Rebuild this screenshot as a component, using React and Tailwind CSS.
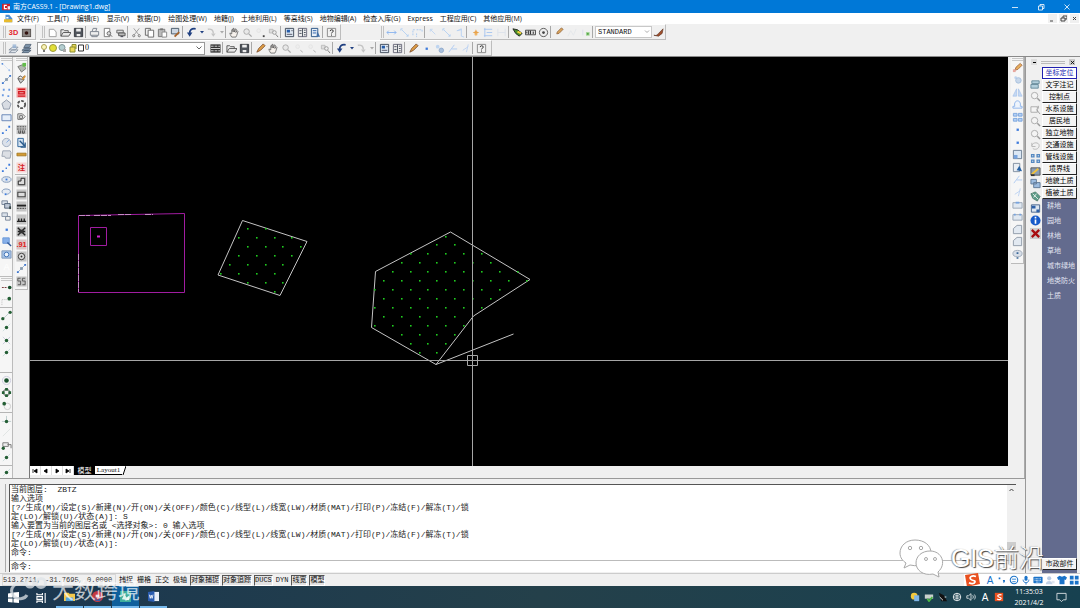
import React from "react";

const ICONS = {
  three: <text x="6" y="9" textAnchor="middle" fontSize="8" fontWeight="700" fill="#e3242b" fontFamily="Liberation Sans, sans-serif">3D</text>,
  camera: <><rect x="1.5" y="2.5" width="9" height="8" fill="#8c8683" stroke="#55504d" /><circle cx="6" cy="6.5" r="2" fill="#33120f" /></>,
  file: <path d="M2.5 2.5h5l2.5 3v5H2.500z" fill="#fff" stroke="#9a9a9a" />,
  open: <path d="M1 10V3h3l1 1h4v2M1 10l2.500-4H12L9.500 10z" fill="#e8e8e8" stroke="#555" />,
  save: <><path d="M1.500 1.500h9v9h-9z" fill="#50555c" stroke="#33373c" /><path d="M3.500 2h5v3h-5zM4 7.500h4V10H4z" fill="#eee" /></>,
  print: <path d="M3.500 4.500l1-3h4l-1 3M1.500 5h9v4h-9zM3 9v1.500h6V9" fill="#eee" stroke="#777f8a" />,
  preview: <><path d="M2.500 1.500h6v9h-6z" fill="#fff" stroke="#777" /><circle cx="7.500" cy="7" r="2" fill="#ddd" stroke="#666" /><path d="M9 8.500l2 2" stroke="#555" /></>,
  plot: <><path d="M2 3.500h7v3H2z" fill="#ddd" stroke="#666" /><path d="M4 6.500h7v3H4z" fill="#bbb" stroke="#555" /><path d="M6 10.500h3" stroke="#334" /></>,
  cut: <><path d="M3 1.500l5.500 7M9 1.500l-5.500 7" stroke="#999" fill="none" /><circle cx="3" cy="9.500" r="1.200" fill="none" stroke="#777" /><circle cx="9" cy="9.500" r="1.200" fill="none" stroke="#777" /></>,
  copy: <><path d="M1.500 1.500h5.500v7.500H1.500z" fill="#eee" stroke="#666" /><path d="M4.500 3.500h6v7.500h-6z" fill="#fff" stroke="#666" /></>,
  paste: <><path d="M1.500 2.500h7v8h-7z" fill="#bbb" stroke="#777" /><path d="M3.500 1.500h3v2h-3z" fill="#777" /><path d="M5.500 5.500h5v5.500h-5z" fill="#fff" stroke="#888" /></>,
  brush: <><path d="M1.500 1.500h8v6h-8z" fill="#ccd6e2" stroke="#445566" /><path d="M5 10.500l5-5" stroke="#a5622b" strokeWidth="2" /></>,
  undo: <><path d="M10.500 2C6 1.200 3.800 3.500 4 7" fill="none" stroke="#1f3f80" strokeWidth="2" /><path d="M1 6h6l-3 4.500z" fill="#1f3f80" /></>,
  redo: <><path d="M2 2.500C6 1.800 8 3.500 8 7" fill="none" stroke="#c4c4c4" strokeWidth="1.500" /><path d="M5.500 7h5L8 10.500z" fill="#c4c4c4" /></>,
  hand: <path d="M3 11C1.500 9 1 7.500 1 6.500l2 1V3l1-.5.500 3V1.500h1l.500 4 1-3.500 1 .5-.5 3.500 1.500-2 .8.8L8.500 9l-1 2z" fill="#f6f1ec" stroke="#555" strokeWidth=".8" />,
  zoom: <><circle cx="5" cy="5" r="3" fill="#e8e8e8" stroke="#aaa" /><path d="M7.500 7.500l3 3" stroke="#aaa" strokeWidth="1.500" /></>,
  zoomWin: <><circle cx="4" cy="4" r="2" fill="#eee" stroke="#e2e2e2" /><path d="M8.500 9h2v2h-2z" fill="#444" /></>,
  zoomPrev: <><path d="M1.500 2.500h4v4h-4z" fill="#ddd" stroke="#bbb" /><circle cx="7" cy="6" r="2" fill="#eee" stroke="#999" /><path d="M8.500 8l2.500 3" stroke="#777" /></>,
  zoomFaint: <><circle cx="4" cy="4" r="2" fill="#eee" stroke="#e4e4e4" /><path d="M7 8l2.500 2" stroke="#aaa" /></>,
  props: <><path d="M1.500 1.500h9v9h-9z" fill="#dde6f0" stroke="#3b4656" /><path d="M3 3h3.500v3H3z" fill="#245ba8" /><path d="M3 8h6M8 4h1.500" stroke="#556" /></>,
  design: <><path d="M1.500 1.500h9v9h-9z" fill="#eee" stroke="#667" /><path d="M6 1.500v9M2.500 4H5M2.500 7H5M7.500 3.500h2M7.500 6h2M7.500 8.500h2" stroke="#444c59" /></>,
  palette: <><path d="M1.500 1.500h7v9h-7z" fill="#e8eff7" stroke="#245082" /><path d="M3 4h4M3 6.500h4" stroke="#245ba8" /><path d="M8 4.500l3 6H7z" fill="#4370a8" /></>,
  help: <><path d="M1.500 1.500h9v9h-9z" fill="#f2f2f2" stroke="#888" /><path d="M4.500 4.500c0-2 3.500-2 3.500 0 0 1.200-2 1-2 2.500M6 8.200v1.200" fill="none" stroke="#222" /></>,
  dimLin: <path d="M1 6h10M3 4L1 6l2 2M9 4l2 2-2 2" fill="none" stroke="#8bb5ef" />,
  dimAl: <path d="M3 3l7 7M2 4V2h2M10 8v2H8" fill="none" stroke="#b4d0f2" />,
  dimArc: <path d="M1 9V3h3M5 3h6v3M5 7v4" fill="none" stroke="#a8c8f0" strokeDasharray="2 1" />,
  dimRad: <path d="M3 3l5 5M2.500 5V2.500H5" fill="none" stroke="#bfd5f2" />,
  dimAng: <path d="M4 4l4-2v8l3 1M8 3l-5 1" fill="none" stroke="#b8d1f2" />,
  spark: <><path d="M6.500 2.500l1 2.500 2.500 1-2.500 1-1 3-1-3L3 6l2.500-1z" fill="#e8a24a" /><path d="M5 7h3v2H5z" fill="#f0b565" /></>,
  base: <path d="M1 2.500h9M1 9.500h9M2 1v10M4 6h6" stroke="#a6c5f0" fill="none" />,
  cont: <path d="M2 2v8M10 2v8M2 6h8" stroke="#dde3eb" fill="none" />,
  lead: <><path d="M1 2l5 1 5 4-3 3-4-3z" fill="#4c8f2a" stroke="#222" /><path d="M6 5l4 2" stroke="#f4d23b" strokeWidth="2" /></>,
  tol: <><path d="M.5 3.500h11v5H.5z" fill="#ddd" stroke="#444" /><path d="M2 5v2M4 4v4M6 4v4M9 5v2.500" stroke="#222" /></>,
  center: <><circle cx="6" cy="6" r="4.500" fill="#eee" stroke="#555" /><circle cx="6" cy="6" r="1.500" fill="#444" /></>,
  pencil: <path d="M3 7.500l.5-2L8 1l2 1.500-4.500 4.500z" fill="#d9a35c" stroke="#8e6238" strokeWidth=".8" />,
  faintA: <path d="M1 10l3-6 3 5 3-7" fill="none" stroke="#e4e7ea" />,
  greenDot: <><path d="M3 3v6" stroke="#dde" /><path d="M6.500 5.500h4v4h-4z" fill="#a5d69a" /><path d="M7.500 6.500h2v2h-2z" fill="#57a548" /></>,
  styleBrush: <path d="M1 9c3 1 4-1 5-2l5-5-1 5-4 3z" fill="#a14f2c" stroke="#5d3322" strokeWidth=".7" />,
  layers: <><path d="M1 7.500l4-3h6L8 7.500zM1 10.500l4-3h6l-3 3z" fill="#dfe5ec" stroke="#8a95a4" /><path d="M5 1.500h4v4H5z" fill="#8cabd2" opacity=".7" /></>,
  layersPrev: <path d="M1 8l3-2.500h7L8 8zM1 10.500L4 8h7l-3 2.500zM3 5l2-3.500h6L9 5z" fill="#7d92a8" stroke="#44566b" strokeWidth=".8" />,
  rows: <><path d="M.5 1.500h11v9H.5z" fill="#333" /><path d="M1 3.500h10M1 8.500h10" stroke="#ddd" strokeDasharray="3 1" /><path d="M1 6h10" stroke="#ddd" /></>,
  match: <path d="M2 10l2-4 5-5 2 2-5 5z" fill="#dd9d45" stroke="#7b4b2b" strokeWidth=".9" />,
  bluePt: <path d="M5 5h2.500v2.500H5z" fill="#3e7bdc" />,
  dblPt: <><circle cx="4" cy="4" r="2" fill="#bfd5f0" /><circle cx="8" cy="8" r="2.500" fill="#a7bfdc" stroke="#7e9dc4" strokeWidth=".7" /></>,
  trim: <path d="M2 10L8 2M5 6.500h6" fill="none" stroke="#aecbf2" />,
  extend: <path d="M3 8l6-4M9 1.500L7 10" fill="none" stroke="#bcd2f2" />,
  line: <><path d="M2 2l8 8" stroke="#d5e3f5" /><circle cx="1.500" cy="2" r="1" fill="#4d85d6" /><circle cx="9" cy="9" r="1" fill="#9dbde9" /></>,
  nodes: <><path d="M1.500 10.500l9-9" stroke="#9bb4d2" /><path d="M1 9h2v2H1zM9 1h2v2H9z" fill="#3c76d0" /><path d="M4.500 4.500h3v3h-3z" fill="#8599ae" /></>,
  pts: <path d="M2 2h2v2H2zM8 2h2v2H8zM1 8h2v2H1zM7 9h2v2H7z" fill="#6b9ae2" />,
  pentagon: <path d="M6 1l5 4-2 6H3L1 5z" fill="#d8dce3" stroke="#8e98a8" />,
  rect: <path d="M1 3h10v6.500H1z" fill="#e6eef9" stroke="#6482b4" />,
  diag: <path d="M1 9h2v2H1zM5 6h1.500v1.500H5zM8 2h2v2H8z" fill="#3c7adb" />,
  circle: <><circle cx="6" cy="6" r="4.500" fill="#dbe1ea" stroke="#9daabd" /><path d="M6 6l3-3" stroke="#7fa7e0" /></>,
  cloud: <path d="M2 2h8l1 2-1 6H5L4 8H1z" fill="#dcdfe4" stroke="#9aa3b0" />,
  ellipse: <><ellipse cx="6" cy="6" rx="5" ry="3" fill="#dfe6ef" stroke="#7e96b8" /><path d="M5 5h2v2H5z" fill="#3c7adb" /></>,
  arc: <><path d="M2 8c-3-4 3-6 7-4 3 2 0 5-3 5" fill="#e6ebf2" stroke="#7e96b8" /><path d="M4 8h2v2H4z" fill="#3c7adb" /></>,
  insert: <><path d="M1 2h6v4H1z" fill="#d9e0e9" stroke="#768498" /><path d="M4 5h6v5H4z" fill="#bfc9d6" stroke="#4e5d73" /><path d="M9 8h2v3H9z" fill="#344" /></>,
  block: <><path d="M1 2h6v4H1z" fill="#d9e0e9" stroke="#8793a4" /><path d="M5 6h5v4H5z" fill="#eee" stroke="#768498" /></>,
  hatch: <><path d="M2 2h7v6H2z" fill="#86afe9" stroke="#6b98d8" /><path d="M7 7l4 4" stroke="#325a99" strokeWidth="1.500" /></>,
  region: <><path d="M1 2h10v8H1z" fill="#a4c2e8" stroke="#7f98ba" /><circle cx="6" cy="6" r="2.500" fill="#eff5fc" stroke="#3b6eb4" /></>,
  letter: <text x="6" y="10" textAnchor="middle" fontSize="10" fill="#fff" fontFamily="Liberation Sans, sans-serif">A</text>,
  blank: null,
  gSpin: <><path d="M2 5l5-2 4 4-5 4z" fill="#b3b8b0" stroke="#777" /><path d="M7 1h4v4H7z" fill="#63bd4b" /></>,
  gPick: <><path d="M2 4l3-2 2 2 3-2M2 5l3 5 4-4z" fill="#ccc" stroke="#555" /><path d="M7 6l3-4" stroke="#d8973d" strokeWidth="2" /></>,
  redBox: <><path d="M.5.500h11v11H.5z" fill="#f2a5a5" /><path d="M2 2.500h8M3 5h6v2.500H3zM2 10h8" fill="none" stroke="#d31920" strokeWidth="1.500" /></>,
  ring: <><circle cx="6" cy="6" r="4" fill="none" stroke="#555" strokeWidth="2" strokeDasharray="3 1.500" /></>,
  tag: <path d="M2 2h5l3 3-3 3H2zM4 4h3v3H4z" fill="#eee" stroke="#666" />,
  grey: <><path d="M.5 1h11v10H.5z" fill="#c4c4c4" /><path d="M1 3h10M1 5.500h10" stroke="#444" strokeDasharray="2 1" /><path d="M3 7v3h2V7M7 7v3h2V7" stroke="#444" fill="none" /></>,
  building: <><path d="M2 1.500h6v9H2z" fill="#d5e4f2" stroke="#285f97" /><path d="M4 4l6 6M10 6v5H5" stroke="#2b5b8b" strokeWidth="1.500" fill="none" /></>,
  ruler: <path d="M1 4.500h10v3H1z" fill="#d39b33" stroke="#9c721f" strokeWidth=".8" />,
  note: <><path d="M.5.500h11v11H.5z" fill="#f6d4d4" /><text x="6" y="9" textAnchor="middle" fontSize="8" fontWeight="700" fill="#d31920" fontFamily="Noto Sans CJK SC, sans-serif">注</text></>,
  lshape: <><path d="M.5.500h11v11H.5z" fill="#c4c4c4" /><path d="M2.500 9.500v-4h3v-3h4v7z" fill="#ddd" stroke="#222" /></>,
  gRect: <><path d="M.5.500h11v11H.5z" fill="#c4c4c4" /><path d="M2 3.500h8v5H2z" fill="#ddd" stroke="#444" strokeWidth="1.200" /></>,
  gLine: <><path d="M.5.500h11v11H.5z" fill="#c4c4c4" /><path d="M1 5h10" stroke="#222" strokeWidth="2" /><path d="M1 8h10" stroke="#333" strokeDasharray="2 1" /></>,
  gWall: <><path d="M.5.500h11v11H.5z" fill="#c4c4c4" /><path d="M1 8h10M3 5v3M6 5v3M9 5v3" stroke="#222" strokeWidth="1.500" /></>,
  gCross: <><path d="M.5.500h11v11H.5z" fill="#bbb" /><path d="M2 2l8 8M10 2l-8 8M2 6h8" stroke="#222" strokeWidth="1.500" /><path d="M4 4h4v4H4z" fill="#333" /></>,
  red91: <><path d="M.5.500h11v11H.5z" fill="#d8c4c4" /><text x="6" y="9" textAnchor="middle" fontSize="8" fontWeight="700" fill="#e02020" fontFamily="Liberation Sans, sans-serif">.91</text></>,
  gCircle: <><path d="M.5.500h11v11H.5z" fill="#c4c4c4" /><circle cx="6" cy="6" r="3.500" fill="#ddd" stroke="#333" /><circle cx="6" cy="6" r="1" fill="#333" /></>,
  gSS: <><path d="M.5.500h11v11H.5z" fill="#c4c4c4" /><path d="M5 2.500H2v3h3v4H2M10 2.500H7v3h3v4H7" fill="none" stroke="#555" /></>,
  sTrack: <><circle cx="9.500" cy="6" r="2" fill="#174f2b" /><path d="M1 6h2M4 6h2" stroke="#732f2f" /></>,
  sFrom: <><path d="M1 11V5h5" stroke="#bbb" strokeDasharray="1 1" fill="none" /><circle cx="9" cy="4" r="2" fill="#245f35" /></>,
  sEnd: <><path d="M2 10l8-8" stroke="#bcc" /><circle cx="2" cy="9.500" r="1.800" fill="#245f35" /><circle cx="10" cy="2.500" r="1.800" fill="#245f35" /></>,
  sMid: <><path d="M2 10l8-8" stroke="#cdd" /><circle cx="6" cy="6" r="1.900" fill="#245f35" /></>,
  sInt: <><path d="M2 10l8-8M2 2l8 8" stroke="#ccd" /><circle cx="6" cy="6" r="1.900" fill="#245f35" /></>,
  sCen: <><circle cx="6" cy="6" r="4.500" fill="none" stroke="#ccd" /><circle cx="6" cy="6" r="2.500" fill="#174f2b" /></>,
  sQuad: <><circle cx="6" cy="6" r="3.500" fill="none" stroke="#555" /><path d="M4.500 1h3v3h-3zM4.500 8h3v3h-3zM1 4.500h3v3H1zM8 4.500h3v3H8z" fill="#245f35" /></>,
  sTan: <><circle cx="7" cy="7" r="3.500" fill="none" stroke="#ccc" /><circle cx="3.500" cy="4" r="2" fill="#245f35" /></>,
  sPerp: <><path d="M6 1v5M1 7h10" stroke="#bcc" /><circle cx="6" cy="7" r="1.900" fill="#245f35" /></>,
  sFaint: <path d="M2 10l8-8" stroke="#dfe4e2" />,
  sIns: <><path d="M2 3h6v4H2zM7 5h4v4" fill="#eee" stroke="#777" /><circle cx="2.500" cy="9" r="1.800" fill="#245f35" /></>,
  erase: <><path d="M3 9l1.500-3.500L9 1.500l2 2L6.500 8z" fill="#e7ae5d" stroke="#9a5a33" strokeWidth=".8" /><path d="M1 8h3v3H1z" fill="#e8a8a0" /></>,
  copies: <><circle cx="4" cy="4" r="1.500" fill="#bdd3ef" /><circle cx="7" cy="7" r="3" fill="#c7d7ea" stroke="#a6bfdd" /></>,
  mirror: <path d="M5 2v8H1zM7 2v8h4z" fill="#c6d9f3" stroke="#a2c1ea" strokeWidth=".7" />,
  offset: <path d="M1 10h10V8H9c2-8-8-8-6 0H1z" fill="#eef4fc" stroke="#8db4ea" />,
  array: <path d="M1.500 1.500h4v3h-4zM7 1.500h4v3H7zM1.500 7h4v3h-4zM7 7h4v3H7z" fill="#b5d1f5" stroke="#7ba5dd" />,
  scale: <><path d="M1.500 1.500h9v9h-9z" fill="#dbe7f4" stroke="#66788f" /><path d="M2 6.500h4v4H2z" fill="#77a4e0" /></>,
  stretch: <><path d="M1.500 1.500h7v9h-7z" fill="#e9eef4" stroke="#7d8c9e" /><path d="M5 9l3-5 3 6z" fill="#2662a5" /></>,
  fillet: <path d="M1.500 10.500V5l4-3.500h5v9z" fill="#e2e9f1" stroke="#8e99a7" />,
  breakBox: <><path d="M1 4h10v6H1z" fill="#e0e8f1" stroke="#98a4b3" /><path d="M4 3h4v2H4z" fill="#77a4e0" /></>,
  join: <><path d="M1 4h10v6H1z" fill="#e0e8f1" stroke="#98a4b3" /><path d="M2 3h2v2H2zM8 3h2v2H8z" fill="#77a4e0" /></>,
  bubble: <><ellipse cx="6" cy="5" rx="5" ry="3.500" fill="#d7dee8" stroke="#9ca9b8" /><path d="M5 3.500h2v2H5zM5 9h2v1.500H5z" fill="#3b6799" /></>,
  disks: <path d="M2 2h8v3H2zM1 6h8v4H1z" fill="#b3cfdc" stroke="#678b9b" />,
  loop: <><circle cx="5" cy="5" r="3.500" fill="#f4f4f4" stroke="#aaa" /><path d="M8 8l3 3" stroke="#999" strokeWidth="1.500" /></>,
  extent: <><path d="M1 3h7v6H1z" fill="#f4f4f4" stroke="#aaa" /><path d="M7 6l4 5M9 2v3" stroke="#999" /></>,
  swap: <path d="M2 5c1-4 8-4 8 0s-5 5-7 3M2 2v4h4" fill="none" stroke="#b4b4b4" />,
  quads: <><path d="M1 1h4v4H1zM7 1h4v4H7zM1 7h4v4H1zM7 7h4v4H7z" fill="#5588c0" /><path d="M2.500 2.500h1v1h-1zM8.500 2.500h1v1h-1zM2.500 8.500h1v1h-1zM8.500 8.500h1v1h-1z" fill="#fff" /></>,
  paint: <><path d="M1 2h10v8H1z" fill="#8a9db5" stroke="#555" /><path d="M2 9l7-6" stroke="#f0c13b" strokeWidth="2" /><path d="M1 9h4v2H1z" fill="#333" /></>,
  sheets: <path d="M1 1.500h6v5H1zM4 5h7v5.500H4z" fill="#9dbce0" stroke="#5f7896" />,
  globe: <><path d="M1 3l5-2 5 5-3 5-5-3z" fill="#5e9d8a" stroke="#44705f" strokeWidth=".8" /><path d="M3 3l6 6M4 7l3-4" stroke="#e9efe9" /></>,
  table: <><path d="M1.500 2h9v8h-9z" fill="#dce6f1" stroke="#44608a" /><path d="M2 3h4v3H2zM7 7h3v3H7z" fill="#2b5fa8" /></>,
  info: <><circle cx="6" cy="6" r="5.500" fill="#1559c9" /><path d="M6 5v4.500M6 2v1.800" stroke="#fff" strokeWidth="1.800" /></>,
  close: <><path d="M0 0h12v12H0z" fill="#ccc" /><path d="M2 2l8 8M10 2l-8 8" stroke="#a80d10" strokeWidth="2.500" /></>,
};

function Svg({ n, c = "size-[11px]" }) {
  return <svg viewBox="0 0 12 12" className={c} aria-hidden="true">{ICONS[n]}</svg>;
}

function Bar({ items }) {
  return items.split(" ").map((n, i) => {
    if (n === "|") return <span key={i} className="h-3 w-[3px] border-l border-[#a8a8a8]" />;
    if (n === "v" || n === "w")
      return (
        <button key={i} aria-label="more" className="flex w-[7px] justify-center">
          <svg viewBox="0 0 4 3" className="h-[3px] w-1"><path d="M0 0h4L2 2.500z" fill={n === "v" ? "#1f3f80" : "#aaa"} /></svg>
        </button>
      );
    return (
      <button key={i} aria-label={n} className="flex h-[13px] w-[13px] items-center justify-center">
        <Svg n={n} />
      </button>
    );
  });
}

function Grip() {
  return <span className="mr-px ml-px h-3 w-[3px] border-x border-[#c2c2c2]" />;
}

function HGrip() {
  return <span className="my-px h-[3px] w-[11px] border-y border-[#c8c8c8]" />;
}

function Strip({ items, className }) {
  return (
    <div className={"flex flex-col items-center justify-between " + className}>
      {items.split(" ").map((n, i) =>
        n === "|" ? (
          <span key={i} className="w-3 border-t border-[#b5b5b5]" />
        ) : (
          <button key={i} aria-label={n} className="flex size-[11px] items-center justify-center"><Svg n={n} /></button>
        )
      )}
    </div>
  );
}

const MENUS = ["文件(F)", "工具(T)", "编辑(E)", "显示(V)", "数据(D)", "绘图处理(W)", "地籍(J)", "土地利用(L)", "等高线(S)", "地物编辑(A)", "检查入库(G)", "Express", "工程应用(C)", "其他应用(M)"];

function inside(poly, x, y) {
  let hit = false;
  for (let i = 0, j = poly.length - 1; i < poly.length; j = i++) {
    const [xi, yi] = poly[i];
    const [xj, yj] = poly[j];
    if (yi > y !== yj > y && x < ((xj - xi) * (y - yi)) / (yj - yi) + xi) hit = !hit;
  }
  return hit;
}

function lattice(poly, ox, oy) {
  const dots = [];
  for (let r = -12; r <= 12; r++)
    for (let c = -14; c <= 18; c++) {
      if ((r + c) % 2 !== 0) continue;
      const x = ox + c * 8.93;
      const y = oy + r * 8.93;
      if (inside(poly, x, y)) dots.push([x, y]);
    }
  return dots;
}

const HEX = [[420.5, 175], [500, 222.5], [443.5, 259], [406, 307.5], [341.5, 270.5], [345.5, 214.5]];
const DIAMOND = [[212.5, 163.5], [277, 184.5], [250, 238.5], [188, 218]];

function Plan() {
  const dots = [...lattice(HEX, 353.8, 224.2), ...lattice(DIAMOND, 208.8, 181)];
  return (
    <svg className="h-full w-full" aria-label="Drawing1">
      <g fill="none" stroke="#c4c4c4" strokeWidth="1">
        <polygon points={HEX.join(" ")} />
        <polygon points={DIAMOND.join(" ")} />
        <path d="M406 307.500l77.500-30.500" />
      </g>
      {dots.map(([x, y], i) => (
        <rect key={i} x={Math.round(x) - 1} y={Math.round(y) - 1} width="1.6" height="1.6" fill="#1fcb1f" />
      ))}
      <path d="M48.500 158.500L154.500 156.500V235.500H48.500z" fill="none" stroke="#a01ca0" />
      <path d="M49 158.500h11M64 158.500h17M88 157.500h13M115 157.500h8M48.500 197v38" fill="none" stroke="#c58ac5" strokeDasharray="6 1" />
      <path d="M60.500 170.500h16v18h-16z" fill="none" stroke="#a01ca0" />
      <path d="M67 179.500h3" stroke="#d022d0" strokeWidth="2" />
      <path d="M442.500 0V600" stroke="#a6a6a6" />
      <line x1="0" x2="100%" y1="303.500" y2="303.500" stroke="#a6a6a6" />
      <path d="M437.500 298.500h10v10h-10z" fill="none" stroke="#a6a6a6" />
    </svg>
  );
}

const LOG = [
  "当前图层:  ZBTZ",
  "输入选项",
  "[?/生成(M)/设定(S)/新建(N)/开(ON)/关(OFF)/颜色(C)/线型(L)/线宽(LW)/材质(MAT)/打印(P)/冻结(F)/解冻(T)/锁",
  "定(LO)/解锁(U)/状态(A)]: S",
  "输入要置为当前的图层名或 <选择对象>: 0 输入选项",
  "[?/生成(M)/设定(S)/新建(N)/开(ON)/关(OFF)/颜色(C)/线型(L)/线宽(LW)/材质(MAT)/打印(P)/冻结(F)/解冻(T)/锁",
  "定(LO)/解锁(U)/状态(A)]:",
  "命令:",
];

const CATS = ["坐标定位", "文字注记", "控制点", "水系设施", "居民地", "独立地物", "交通设施", "管线设施", "境界线", "地貌土质", "植被土质"];
const SUBS = ["耕地", "园地", "林地", "草地", "城市绿地", "地类防火", "土质"];
const MODES = [["捕捉", 0], ["栅格", 0], ["正交", 0], ["极轴", 0], ["对象捕捉", 1], ["对象追踪", 1], ["DUCS", 1], ["DYN", 0], ["线宽", 1], ["模型", 1]];

function TitleBar() {
  return (
    <header className="flex h-[13px] shrink-0 items-center bg-[#0078d7] pl-[2px] text-[8px] text-white">
      <svg viewBox="0 0 10 10" className="mr-[3px] size-2"><path d="M0 1h10v8H0z" fill="#c9202b" /><path d="M6 3H3v4h3" stroke="#fff" strokeWidth="1.500" fill="none" /><path d="M7 4h3v4H7z" fill="#e8e8f5" /></svg>
      <h1 className="flex-1 text-[7px] leading-[13px]">南方CASS9.1 - [Drawing1.dwg]</h1>
      <div className="flex">
        {["M1 4.500h6", "M1.500 3h4v4h-4zM3 3V1.500h4v4H5.500", "M1.500 1.500l5 5M6.500 1.500l-5 5"].map((d, i) => (
          <button key={d} aria-label={["minimize", "restore", "close"][i]} className="flex h-3 w-[26px] items-center justify-center">
            <svg viewBox="0 0 8 8" className="size-2"><path d={d} fill="none" stroke="#fff" strokeWidth=".8" /></svg>
          </button>
        ))}
      </div>
    </header>
  );
}

function MenuBar() {
  return (
    <nav className="flex h-[11px] shrink-0 items-center bg-white text-[7px] leading-[11px]">
      <svg viewBox="0 0 12 12" className="mr-1 ml-1 size-[9px]"><path d="M2 1h5l4 5v5H2z" fill="#4f8fd2" /><path d="M0 7h11v4H0z" fill="#e8bb2e" /><path d="M3 4h3v2H3z" fill="#fff" /></svg>
      <div className="flex flex-1">
        <div className="flex gap-[8px] pr-[7px]">
          {MENUS.slice(0, 6).map((m) => <button key={m} className="whitespace-nowrap">{m}</button>)}
        </div>
        <div className="flex gap-[7px]">
          {MENUS.slice(6).map((m) => <button key={m} className="whitespace-nowrap">{m}</button>)}
        </div>
      </div>
      <div className="flex gap-[2px] pr-px">
        {["M1 6h3", "M1 3h4v3H1zM3 3V1h4v3H5", "M2 2l3 3M5 2L2 5"].map((d, i) => (
          <button key={d} aria-label={["minimize drawing", "restore drawing", "close drawing"][i]} className="flex h-[9px] w-[9px] items-center justify-center bg-[#f0f0f0]">
            <svg viewBox="0 0 7 7" className="size-[7px]"><path d={d} fill="none" stroke="#444" /></svg>
          </button>
        ))}
      </div>
    </nav>
  );
}

const barBox = "flex h-4 items-center border-r border-b border-[#bdbdbd] border-t border-t-white";

function Toolbars() {
  return (
    <div className="shrink-0 border-b border-[#8a8a8a]">
      <div className="flex">
        <div className={barBox + " w-[36px] pl-[2px]"}><Grip /><Bar items="three camera" /></div>
        <div className={barBox + " ml-1 pl-px pr-[2px]"}>
          <Grip />
          <Bar items="file open save | print preview plot | cut copy paste brush | undo v redo w | hand zoom zoomWin zoomPrev | props design palette | help" />
        </div>
        <div className={barBox + " ml-[39px]"}>
          <Grip />
          <Bar items="dimLin dimAl dimArc | dimRad dimAl dimAng | spark base cont | lead tol center | pencil faintA greenDot |" />
          <select aria-label="dimension style" className="h-3 w-[57px] appearance-none border border-[#c8c8c8] bg-white px-[2px] font-['Liberation_Mono',monospace] text-[7px] leading-[10px]"><option>STANDARD</option></select>
          <svg viewBox="0 0 6 4" className="-ml-2 mr-[2px] h-1 w-[6px]"><path d="M1 .5l2 2 2-2" fill="none" stroke="#aaa" /></svg>
          <Bar items="styleBrush" />
        </div>
      </div>
      <div className="flex">
        <div className={barBox + " pl-[2px]"}>
          <Grip />
          <Bar items="layers layersPrev" />
          <div className="mx-1 flex h-[13px] w-[168px] items-center border border-[#9a9a9a] bg-white pl-[2px]">
            <svg viewBox="0 0 44 10" className="h-[10px] w-11 shrink-0">
              <circle cx="4" cy="4" r="2.500" fill="#fbf5b8" stroke="#aa9f52" /><path d="M3 7h2v2H3z" fill="#777" />
              <circle cx="13" cy="5" r="3.500" fill="#e2df37" stroke="#9d9b3b" />
              <circle cx="22" cy="4.500" r="3" fill="#b5ced0" stroke="#7e9799" /><path d="M23 6h3v3h-3z" fill="#aaa" />
              <path d="M30 4h5v5h-5zM32 4V1.500h4V6" fill="#ead957" stroke="#8a8c30" />
              <path d="M38.500 2h5v6h-5z" fill="#fff" stroke="#333" />
            </svg>
            <select aria-label="layer" className="h-full min-w-0 flex-1 appearance-none bg-transparent pl-px font-['Liberation_Serif',serif] text-[8px] leading-[10px]"><option>0</option></select>
            <svg viewBox="0 0 6 4" className="mr-[2px] h-1 w-[6px]"><path d="M.5 .5L3 3l2.500-2.500" fill="none" stroke="#666" /></svg>
          </div>
          <Bar items="rows | open save | match hand zoom zoomFaint zoomFaint zoomPrev | undo v redo w | props design | match bluePt dblPt trim extend | help" />
          <span className="w-[3px]" />
        </div>
      </div>
    </div>
  );
}

function LeftTools() {
  return (
    <div className="flex w-[30px] shrink-0 items-start gap-[2px] border-r border-[#777]">
      <div className="flex h-full w-[13px] flex-col border-r border-[#bbb] bg-[#f6f6f6]">
        <div className="flex flex-col items-center border-b border-[#bbb] pb-1"><HGrip />
          <Strip className="h-[210px]" items="line nodes pts pentagon rect diag circle cloud diag ellipse arc insert block bluePt hatch region letter" />
        </div>
        <div className="flex flex-1 flex-col items-center"><HGrip />
          <Strip className="h-[196px]" items="sTrack sFrom | sEnd sMid sInt sMid blank | sCen sQuad sTan | sPerp sFaint sIns sMid | sMid" />
        </div>
      </div>
      <div className="flex w-[13px] flex-col items-center border-r border-b border-[#bbb] bg-[#f6f6f6] pb-[2px]"><HGrip />
        <Strip className="h-[225px]" items="gSpin gPick redBox ring tag grey building ruler note | lshape gRect gLine gWall gCross red91 gCircle nodes gSS" />
      </div>
    </div>
  );
}

function RightTools() {
  return (
    <div className="w-[17px] shrink-0 border-r border-[#aaa] pl-[3px]">
      <div className="flex w-[13px] flex-col items-center border-r border-b border-[#bbb] bg-[#f6f6f6] pb-[3px]"><HGrip />
        <Strip className="h-[198px]" items="erase copies mirror offset array bluePt bluePt scale stretch trim extend breakBox join fillet fillet bubble" />
      </div>
    </div>
  );
}

function LayoutTabs() {
  return (
    <div className="flex h-[9px] shrink-0 items-stretch text-[7px] leading-[9px]">
      <div className="flex bg-white">
        {["M1 1v4M5 1v4L2 3z", "M4 1v4L1 3z", "M2 1v4l3-2z", "M1 1v4l3-2zM5 1v4"].map((d, i) => (
          <button key={d} aria-label={["first", "previous", "next", "last"][i]} className="flex w-[11px] items-center justify-center border-r border-[#ddd]">
            <svg viewBox="0 0 6 6" className="size-[6px]"><path d={d} fill="#000" stroke="#000" strokeWidth=".8" /></svg>
          </button>
        ))}
      </div>
      <button className="w-[21px] bg-black text-center text-white">模型</button>
      <button className="w-[27px] border-b border-black bg-white text-center font-['Liberation_Serif',serif] leading-[8px]">Layout1</button>
      <svg viewBox="0 0 4 9" className="h-[9px] w-1"><path d="M0 0h4L1 9H0z" fill="#fff" /><path d="M4 0L1 9" stroke="#000" /></svg>
    </div>
  );
}

function CommandPane() {
  return (
    <section className="flex h-[95px] shrink-0 border-t border-[#999] pt-[5px] pr-[9px] pb-px pl-[5px]">
      <span className="w-1 border-l border-[#aaa]" />
      <div className="flex min-w-0 flex-1 flex-col border-t border-l border-[#555] bg-white font-['Liberation_Mono','Noto_Sans_CJK_SC',monospace] text-[8px] text-[#222]">
        <div className="flex flex-1">
          <div className="flex-1 overflow-hidden pl-px">
            {LOG.map((l, i) => <p key={i} className="h-[9px] leading-[9px] whitespace-pre">{l}</p>)}
          </div>
          <div className="flex w-[9px] flex-col justify-between bg-[#f0f0f0]">
            <svg viewBox="0 0 9 9" className="size-[9px]"><path d="M2.500 6l2-2 2 2" fill="none" stroke="#444" /></svg>
            <span className="mb-[9px] h-[9px] bg-[#cdcdcd]" />
          </div>
        </div>
        <label className="flex h-3 items-center border-t border-[#bbb] pl-px leading-[11px]">
          命令:
          <input aria-label="command" className="h-[10px] min-w-0 flex-1 bg-transparent pl-1 outline-none" />
        </label>
      </div>
    </section>
  );
}

function SidePanel() {
  return (
    <aside className="flex w-[55px] shrink-0 flex-col border-l border-[#999] pr-[3px] pl-[3px]">
      <div className="flex h-[10px] items-center gap-1 px-[2px]">
        <button aria-label="collapse" className="flex size-[6px] items-center justify-center bg-[#ddd]"><span className="h-px w-[3px] bg-black" /></button>
        <span className="h-[3px] flex-1 border-y border-[#bbb]" />
        <button aria-label="close panel" className="flex size-[6px] items-center justify-center bg-[#ccc]"><svg viewBox="0 0 6 6" className="size-[5px]"><path d="M1 1l4 4M5 1L1 5" stroke="#000" /></svg></button>
      </div>
      <div className="flex min-h-0 flex-1 gap-px">
        <Strip className="mt-[12px] h-[160px] w-3" items="disks loop extent loop loop swap quads paint sheets globe table info close" />
        <div className="flex min-w-0 flex-1 flex-col bg-[#636b8e] text-[7px]">
          {CATS.map((c, i) => (
            <button key={c} className={"h-3 border text-center leading-[10px] whitespace-nowrap " + (i === 0 ? "border-[#2020b0] bg-white text-[#2020b0]" : "border-t-white border-r-[#222] border-b-[#222] border-l-white bg-[#f4f4f4] text-black")}>{c}</button>
          ))}
          <ul className="flex flex-1 flex-col gap-[6px] pt-[2px] pl-[5px] leading-[9px] text-[#e2e5f2]">
            {SUBS.map((s) => <li key={s} className="h-[9px] whitespace-nowrap"><a href="#layer">{s}</a></li>)}
          </ul>
          <button className="mb-[3px] h-3 border border-t-white border-r-[#222] border-b-[#222] border-l-white bg-[#f4f4f4] text-center leading-[10px] whitespace-nowrap">市政部件</button>
        </div>
      </div>
    </aside>
  );
}

const IME = [
  ["mode", <text x="6" y="11" textAnchor="middle" fontSize="12" fill="#1a73c9" fontFamily="Liberation Sans, sans-serif">A</text>],
  ["punctuation", <path d="M2 3h2v2H2zM7 6h2.500v2l-1.500 2" fill="#1a73c9" />],
  ["emoji", <><circle cx="6" cy="6" r="4.500" fill="#fff" stroke="#1a73c9" strokeWidth="1.300" /><path d="M3.500 5h5M4 8h4" stroke="#1a73c9" /></>],
  ["voice", <><rect x="4.200" y="1" width="3.600" height="6" rx="1.800" fill="#1a73c9" /><path d="M2.500 5.500c0 5 7 5 7 0M6 9v2.500" fill="none" stroke="#1a73c9" /></>],
  ["keyboard", <><rect x=".5" y="2" width="11" height="8" rx="1" fill="#1a73c9" /><path d="M2 4.500h8M2 6.500h8M3.500 8.500h5" stroke="#fff" strokeDasharray="1 .6" /></>],
  ["account", <><circle cx="5" cy="4" r="2.500" fill="#b9cce4" /><path d="M1 11c0-5 8-5 8 0z" fill="#c3d2e6" /><path d="M8 7h3.500v3H8z" fill="#dfe6ef" /></>],
  ["skin", <path d="M0 3l3-2 3 1 3-1 3 2-1.500 3L9 5.500V11H3V5.500L1.500 6z" fill="#1a73c9" />],
  ["tools", <path d="M1 1h4.500v4.500H1zM7 1h4.500v4.500H7zM1 7h4.500v4.500H1zM7 7h4.500v4.500H7z" fill="#1a73c9" />],
];

function StatusBar() {
  return (
    <div className="flex h-[13px] shrink-0 items-center border-t border-[#ccc] text-[7px] leading-[10px]">
      <output className="ml-[2px] w-[114px] border border-[#d8d8d8] font-['Liberation_Mono',monospace] whitespace-pre text-[#333]">513.2711, -31.7695, 0.0000</output>
      <div className="ml-[2px] flex flex-1 gap-[2px] font-['Liberation_Mono','Noto_Sans_CJK_SC',monospace]">
        {MODES.map(([m, on]) => (
          <button key={m} className={"h-[11px] border leading-[9px] whitespace-nowrap " + (on ? "border-[#555] border-r-white border-b-white bg-[#e2e2e2]" : "border-transparent")}>{m}</button>
        ))}
      </div>
      <div className="flex h-full items-center gap-[2px] bg-white pr-px">
        <svg viewBox="0 0 16 14" className="mr-[3px] h-[14px] w-4"><path d="M1 2l13-2 2 11-13 3z" fill="#e9501f" /><path d="M12 3.500C8 2 5 4 6.500 6s5 1 4.500 3-4 2-6 .8" fill="none" stroke="#fff" strokeWidth="1.700" /></svg>
        {IME.map(([n, art]) => (
          <button key={n} aria-label={n} className="flex w-[10px] justify-center"><svg viewBox="0 0 12 12" className="size-[10px]">{art}</svg></button>
        ))}
      </div>
    </div>
  );
}

const TRAY = [
  ["security", <><circle cx="5" cy="5" r="4" fill="#f2c93c" /><path d="M5 4h6v7H5z" fill="#7fb6e8" /></>],
  ["disk", <><path d="M1 3h10v5H1z" fill="#c9d0cd" /><path d="M4 8l2 3 4-5" stroke="#4dbb45" strokeWidth="2" fill="none" /></>],
  ["pet", <><path d="M1 1l6 3 4 7H4z" fill="#111" /><path d="M2 6l4 4M8 6h2" stroke="#fff" /></>],
  ["network", <><circle cx="6" cy="6" r="4.500" fill="none" stroke="#fff" /><path d="M1.500 6h9M6 1.500v9M3 3c2 2 4 2 6 0M3 9c2-2 4-2 6 0" stroke="#fff" fill="none" strokeWidth=".8" /></>],
  ["volume", <path d="M1 4.500h2l3-2.500v8L3 7.500H1zM8 4c1 1 1 3 0 4M10 3c1.500 2 1.500 4 0 6" fill="none" stroke="#e5eaec" />],
  ["language", <text x="6" y="11" textAnchor="middle" fontSize="12" fill="#fff" fontFamily="Liberation Sans, sans-serif">A</text>],
  ["input", <><path d="M1 1h10v10H1z" fill="#e9501f" /><path d="M9 3.500C6 2.500 3.500 4 5 5.500s4 1 3.500 2.500-3 1.500-5 .5" fill="none" stroke="#fff" strokeWidth="1.400" /></>],
];

const APPS = [
  ["start", "", <path d="M0 1.500l5-.8V6H0zM6 .5L12 0v6H6zM0 7h5v4.500L0 11zM6 7h6v5l-6-.6z" fill="#fff" />],
  ["task view", "", <path d="M1 1v2h6V1M1 5h6v3H1zM1 12v-2h6v2M10 1v11" fill="none" stroke="#fff" strokeWidth="1.200" />],
  ["files", "border-b-2 border-[#76b9ed]", <><path d="M0 2h5l1 1h6v8H0z" fill="#f3c84b" /><path d="M2 7h8v4H2z" fill="#53a4dc" /></>],
  ["badge", "border-b-2 border-[#76b9ed]", <><circle cx="6" cy="6" r="6" fill="#c53942" /><path d="M2 6l4 4 4-4-1 5H4z" fill="#3e58a8" /><path d="M4 4h4v3H4z" fill="#e7e2ea" /></>],
  ["cass", "border-b-2 border-[#76b9ed] bg-[#0f5f9c]", <><path d="M0 0h12v12H0z" fill="#3fae9c" /><path d="M2 9l3-6 2 4 3-2v5z" fill="#dff5ee" /></>],
  ["word", "border-b-2 border-[#76b9ed]", <><path d="M5 1h7v10H5z" fill="#e8eef8" /><path d="M0 1l7-1v12l-7-1z" fill="#2a5cb0" /><path d="M1.500 4l1 4 1-3.500 1 3.500 1-4" fill="none" stroke="#fff" strokeWidth=".9" /></>],
];

function Taskbar() {
  return (
    <footer className="relative flex h-[22px] shrink-0 items-center bg-gradient-to-r from-[#1b3750] via-[#24404a] to-[#174150] text-white">
      <div className="flex h-full flex-1 gap-px">
        {APPS.map(([n, cls, art]) => (
          <button key={n} aria-label={n} className={"flex h-full w-[27px] items-center justify-center " + cls}>
            <svg viewBox="0 0 12 12" className="size-[11px]">{art}</svg>
          </button>
        ))}
      </div>
      <div className="flex gap-[4px]">
        {TRAY.map(([n, art]) => (
          <button key={n} aria-label={n}><svg viewBox="0 0 12 12" className="size-[10px]">{art}</svg></button>
        ))}
      </div>
      <time className="ml-1 w-[42px] text-center text-[7px] leading-[11px]">11:35:03<br />2021/4/2</time>
      <button aria-label="notifications" className="mr-[13px] ml-[6px]"><svg viewBox="0 0 12 12" className="size-[11px]"><path d="M1 1.500h10v7H8L6 10.500l-2-2H1z" fill="none" stroke="#d6dde0" /></svg></button>
      <div className="pointer-events-none absolute bottom-[5px] left-2 flex items-center gap-[2px] text-white/70">
        <svg viewBox="0 0 42 28" className="h-7 w-[42px]">
          <g fill="none" stroke="#dfe4e8" strokeOpacity=".75" strokeWidth="3"><path d="M17 9C7 5 1 14 5 20s12 4 14 0" /><circle cx="22" cy="8" r="4" /><circle cx="33" cy="8" r="4.500" /></g>
        </svg>
        <span className="text-[22px] leading-7 whitespace-nowrap">大数跨境</span>
      </div>
    </footer>
  );
}

function ChatMark() {
  return (
    <div className="pointer-events-none absolute right-[36px] bottom-[30px] flex items-center gap-[6px]">
      <svg viewBox="0 0 46 40" className="h-10 w-[46px]">
        <g fill="#fff" stroke="#a8a8a8" strokeWidth="1">
          <path d="M16 2C7 2 1 8 1 15c0 5 3 8 6 10l-2 5 6-3c13 3 21-4 21-12S25 2 16 2z" />
          <path d="M31 13c-8 0-14 5-14 12s7 13 17 11l6 3-1-5c9-8 4-21-8-21z" />
          <circle cx="11" cy="10" r="1.700" /><circle cx="22" cy="10" r="1.700" /><circle cx="27" cy="21" r="1.500" /><circle cx="36" cy="21" r="1.500" />
        </g>
      </svg>
      <span className="font-['Liberation_Sans','Noto_Sans_CJK_SC',sans-serif] text-[25px] leading-8 font-light whitespace-nowrap text-white [text-shadow:1px_1px_1px_#444,-1px_0_1px_#999]">GIS前沿</span>
    </div>
  );
}

export default function App() {
  return (
    <div className="relative flex h-screen flex-col overflow-hidden bg-[#f0f0f0] font-['Open_Sans','Noto_Sans_CJK_SC',sans-serif] text-[#111]">
      <TitleBar />
      <MenuBar />
      <Toolbars />
      <main className="flex min-h-0 flex-1">
        <div className="flex min-w-0 flex-1 flex-col">
          <div className="flex min-h-0 flex-1 overflow-hidden">
            <LeftTools />
            <div className="flex min-w-0 flex-1 flex-col pb-[3px]">
              <div className="min-h-0 flex-1 bg-black"><Plan /></div>
              <LayoutTabs />
            </div>
            <RightTools />
          </div>
          <CommandPane />
        </div>
        <SidePanel />
      </main>
      <StatusBar />
      <Taskbar />
      <ChatMark />
    </div>
  );
}
